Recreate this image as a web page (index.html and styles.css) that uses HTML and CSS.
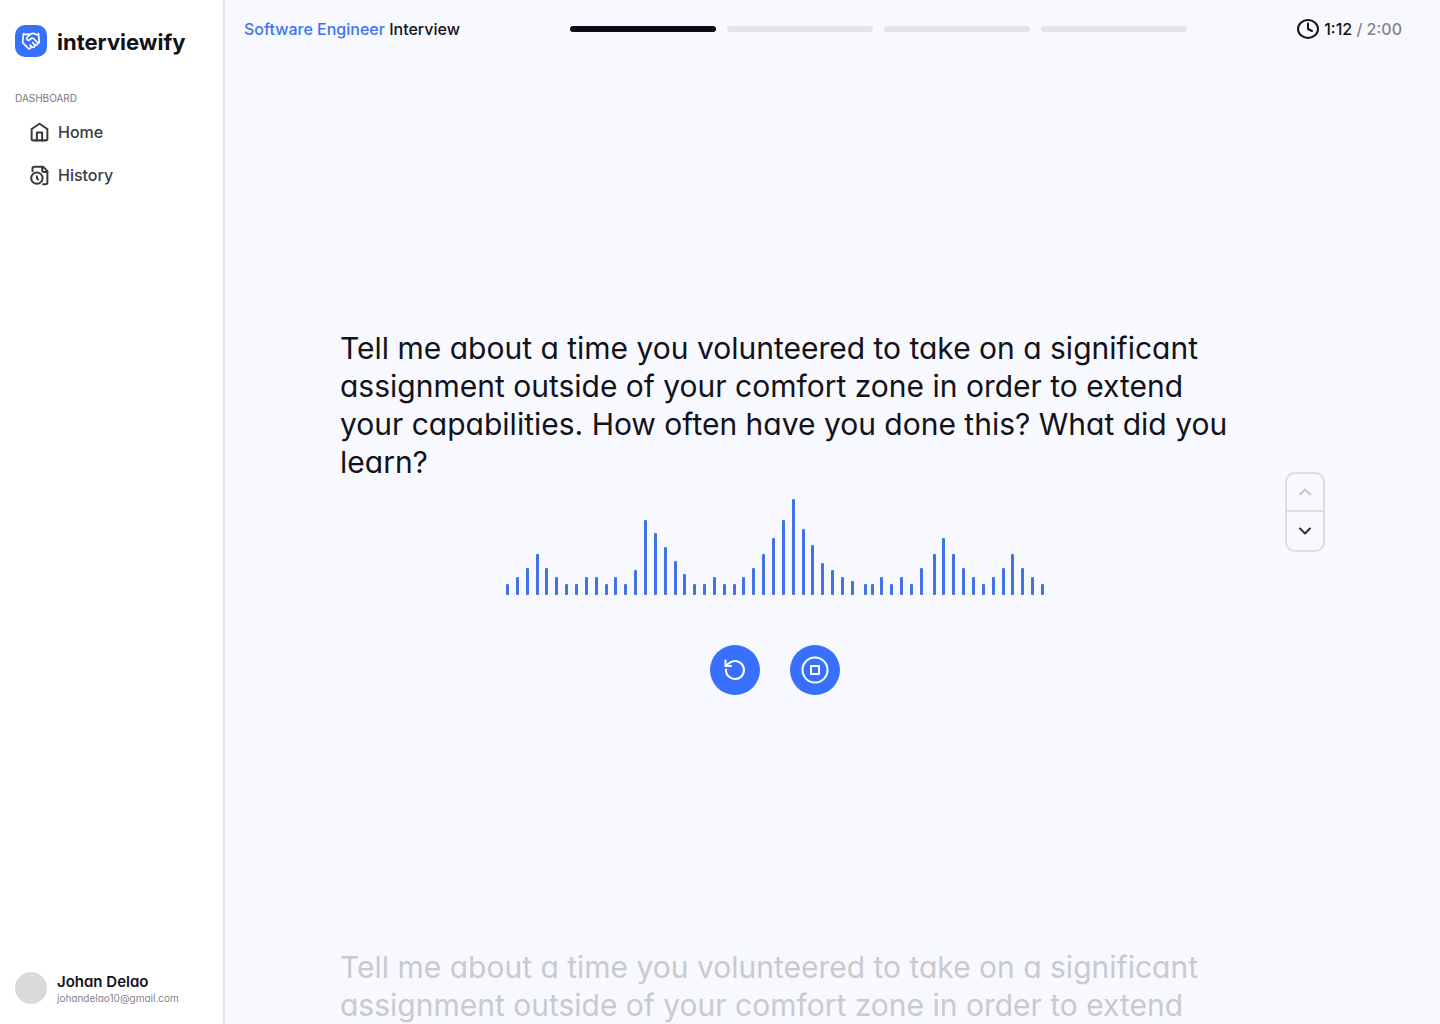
FILE: index.html
```html
<!DOCTYPE html>
<html lang="en">
<head>
<meta charset="utf-8">
<meta name="viewport" content="width=device-width, initial-scale=1">
<title>Software Engineer Interview – interviewify</title>
<link rel="stylesheet" href="styles.css">
</head>
<body>
<div class="app">
  <aside class="sidebar">
    <a class="brand" href="#">
      <span class="brand-mark">
        <svg width="20" height="20" viewBox="0 0 24 24" class="icon"><path d="m11 17 2 2a1 1 0 1 0 3-3"/><path d="m14 14 2.500 2.500a1 1 0 1 0 3-3l-3.880-3.880a3 3 0 0 0-4.240 0l-.88.88a1 1 0 1 1-3-3l2.810-2.810a5.790 5.790 0 0 1 7.060-.87l.47.28a2 2 0 0 0 1.420.25L21 4"/><path d="m21 3 1 11h-2"/><path d="M3 3 2 14l6.500 6.500a1 1 0 1 0 3-3"/><path d="M3 4h8"/></svg>
      </span>
      <span class="brand-name">interviewify</span>
    </a>
    <h2 class="nav-title">DASHBOARD</h2>
    <nav class="nav">
      <a class="nav-link" href="#">
        <svg width="21" height="21" viewBox="0 0 24 24" class="icon"><path d="M12 2 3 8v11a2 2 0 0 0 2 2h14a2 2 0 0 0 2-2V8z"/><path d="M9 21v-9h6v9"/></svg>
        Home
      </a>
      <a class="nav-link" href="#">
        <svg width="21" height="21" viewBox="0 0 24 24" class="icon"><path d="M16 22h3a2 2 0 0 0 2-2V7l-5-5H6a2 2 0 0 0-2 2v3"/><path d="M15 2v4a2 2 0 0 0 2 2h4"/><circle cx="9" cy="15" r="6.500"/><path d="M10.500 16.500 9 15.250V13"/></svg>
        History
      </a>
    </nav>
    <div class="profile">
      <span class="avatar"></span>
      <div>
        <div class="profile-name">Johan Delao</div>
        <div class="profile-mail">johandelao10@gmail.com</div>
      </div>
    </div>
  </aside>

  <main class="stage">
    <header class="topbar">
      <h1 class="title"><span class="role">Software Engineer</span> Interview</h1>
      <div class="steps" role="img" aria-label="Question 1 of 4">
        <span class="step step-current"></span><span class="step"></span><span class="step"></span><span class="step"></span>
      </div>
      <div class="timer">
        <svg width="24" height="24" viewBox="0 0 24 24" class="icon"><ellipse cx="12" cy="12" rx="10" ry="9"/><path d="M12 6.500V12l4 2"/></svg>
        <span>1:12 <span class="timer-total">/ 2:00</span></span>
      </div>
    </header>

    <section class="slide">
      <p class="question">Tell me about a time you volunteered to take on a significant assignment outside of your comfort zone in order to extend your capabilities. How often have you done this? What did you learn?</p>
      <svg class="wave" width="538" height="96" viewBox="0 0 538 96" id="wave" aria-hidden="true"></svg>
      <div class="controls">
        <button class="round" type="button" aria-label="Restart">
          <svg width="26" height="26" viewBox="0 0 26 26" class="icon"><path d="M4 12.500a9 9 0 1 0 3-6.200L3.500 9"/><path d="M3.500 3.500V9H9"/></svg>
        </button>
        <button class="round" type="button" aria-label="Stop">
          <svg width="30" height="30" viewBox="0 0 30 30" class="icon"><circle cx="15" cy="15" r="12.500"/><path d="M11 11h8v8h-8z" stroke-linejoin="miter"/></svg>
        </button>
      </div>
    </section>

    <div class="pager">
      <button class="pager-btn" type="button" aria-label="Previous question" disabled>
        <svg width="20" height="20" viewBox="0 0 20 20" class="icon"><path d="m5 12.500 5-5 5 5"/></svg>
      </button>
      <button class="pager-btn" type="button" aria-label="Next question">
        <svg width="20" height="20" viewBox="0 0 20 20" class="icon"><path d="m5 7.500 5 5 5-5"/></svg>
      </button>
    </div>

    <section class="upcoming">
      <p class="question">Tell me about a time you volunteered to take on a significant assignment outside of your comfort zone in order to extend</p>
    </section>
  </main>
</div>
<script src="wave.js"></script>
</body>
</html>
```
FILE: styles.css
```css
* { box-sizing: border-box; }

body {
  margin: 0;
  font-family: Inter, "Liberation Sans", sans-serif;
  font-feature-settings: "cv11";
  color: #12121a;
  background: #f8f9ff;
}

h1, h2, p { margin: 0; }
a { color: inherit; text-decoration: none; }

button {
  margin: 0;
  padding: 0;
  border: 0;
  background: none;
  color: inherit;
  cursor: pointer;
}

.icon {
  display: block;
  flex: none;
  fill: none;
  stroke: currentColor;
  stroke-width: 2;
  stroke-linecap: round;
  stroke-linejoin: round;
}

.app {
  display: grid;
  grid-template-columns: 225px minmax(0, 1fr);
  height: 100vh;
}

.sidebar {
  display: flex;
  flex-direction: column;
  padding: 25px 15px 20px;
  background: #fff;
  border-right: 2px solid #e3e3e8;
}

.brand { display: flex; align-items: center; gap: 10px; }

.brand-mark {
  display: grid;
  place-items: center;
  width: 32px;
  height: 32px;
  border-radius: 10px;
  background: #3770ff;
  color: #fff;
}

.brand-name { padding-top: 2px; font-size: 22px; font-weight: 700; line-height: 30px; }

.nav-title {
  margin-top: 35px;
  font-size: 10px;
  font-weight: 400;
  line-height: 12px;
  color: #77777c;
}

.nav { display: flex; flex-direction: column; gap: 19px; padding: 16px 14px; }
.nav .icon { stroke-width: 2.3; }

.nav-link {
  display: flex;
  align-items: center;
  gap: 8px;
  font-size: 16px;
  font-weight: 500;
  line-height: 24px;
  color: #3a3a3d;
}

.profile { display: flex; align-items: center; gap: 10px; margin-top: auto; }
.avatar { width: 32px; height: 32px; border-radius: 50%; background: #d9d9d9; }
.profile-name { font-size: 15px; font-weight: 600; line-height: 20px; }
.profile-mail { font-size: 10px; line-height: 12px; color: #85858a; }

.stage {
  display: grid;
  grid-template-columns: minmax(0, 870px) 40px;
  grid-template-rows: minmax(0, 1fr) auto minmax(0, 1fr);
  justify-content: space-between;
  align-items: center;
  height: 100vh;
  padding: 0 115px;
  overflow: hidden;
}

.topbar {
  grid-column: 1 / -1;
  align-self: start;
  display: flex;
  align-items: center;
  justify-content: space-between;
  gap: 24px;
  height: 58px;
  margin: 0 -77px 0 -96px;
}

.title { font: 500 16px/24px Inter, sans-serif; white-space: nowrap; }
.role { color: #3f74ee; }

.steps { display: flex; flex: 0 1 617px; gap: 11px; }
.step { flex: 1; height: 6px; border-radius: 3px; background: #e3e3ea; }
.step-current { background: #0c0c17; }

.timer {
  display: flex;
  align-items: center;
  gap: 4px;
  font-size: 16px;
  font-weight: 500;
  line-height: 24px;
  white-space: nowrap;
}
.timer-total { color: #85858c; }

/* The text may run a little into the gutter beside the pager. */
.question { align-self: stretch; margin-right: -24px; font-size: 30px; line-height: 38px; }

.slide { display: flex; flex-direction: column; align-items: center; }

.wave { display: block; max-width: 100%; margin-top: 18px; fill: #4273e6; }

.controls { display: flex; gap: 30px; margin-top: 50px; }

.round {
  display: grid;
  place-items: center;
  width: 50px;
  height: 50px;
  border-radius: 50%;
  background: #3770ff;
  color: #fff;
}

.pager { border: 2px solid #dddde3; border-radius: 10px; }

.pager-btn {
  display: grid;
  place-items: center;
  width: 36px;
  height: 36px;
  color: #303036;
}
.pager-btn + .pager-btn { height: 40px; border-top: 2px solid #dddde3; }
.pager-btn:disabled { color: #c5c5cc; cursor: default; }

.upcoming { align-self: start; padding-top: 253px; color: #c9cacf; }
```
FILE: wave.js
```js
// Each entry is [left, height] of one bar, standing on the baseline at y = 96.
const bars = [
  [0,11],[10,18],[20,27],[30,41],[39,27],[49,18],[59,11],[69,11],[79,18],[89,18],[99,11],
  [108,18],[118,11],[128,25],[138,75],[148,62],[158,48],[168,34],[177,21],[187,11],[197,11],
  [207,18],[217,11],[227,11],[236,18],[246,27],[256,41],[266,57],[276,75],[286,96],[296,66],
  [305,50],[315,32],[325,25],[335,18],[345,14],[358,11],[365,11],[374,18],[384,11],[394,18],
  [404,11],[414,27],[427,41],[436,57],[446,41],[456,27],[466,18],[476,11],[486,18],[496,27],
  [505,41],[515,27],[525,18],[535,11]
];
const wave = document.getElementById('wave');
for (const [x, h] of bars) {
  const rect = document.createElementNS('http://www.w3.org/2000/svg', 'rect');
  rect.setAttribute('x', x);
  rect.setAttribute('y', 96 - h);
  rect.setAttribute('width', 3);
  rect.setAttribute('height', h);
  rect.setAttribute('rx', 1);
  wave.appendChild(rect);
}
```
